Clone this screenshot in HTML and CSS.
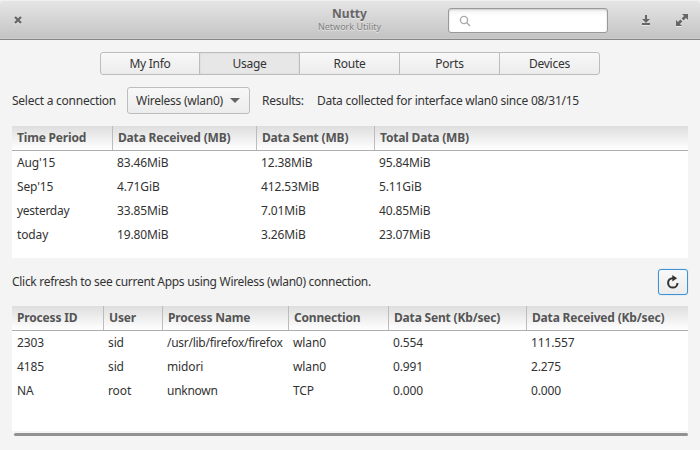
FILE: index.html
```html
<!DOCTYPE html>
<html lang="en">
<head>
<meta charset="utf-8">
<title>Nutty</title>
<link rel="stylesheet" href="styles.css">
</head>
<body>
<header class="titlebar">
  <svg class="icon close" width="8" height="8" viewBox="0 0 8 8"><path d="M1 1l6 6M7 1L1 7"/></svg>
  <div class="title"><h1>Nutty</h1><p>Network Utility</p></div>
  <div class="search"><svg width="13" height="13" viewBox="0 0 13 13"><circle cx="5" cy="5" r="3.6"/><path d="M7.8 7.8L11 11"/></svg></div>
  <svg class="icon download" width="9" height="11" viewBox="0 0 9 11"><path d="M3 0h2v4h3L4 8 0 4h3zM0 8h8v2H0z"/></svg>
  <svg class="icon expand" width="13" height="13" viewBox="0 0 13 13"><path d="M6 0h6v6l-2-2-2.4 2.4L5.6 4.4 8 2zM0 6l2 2 2.4-2.4 2 2L4 10l2 2H0z"/></svg>
</header>
<nav class="tabs"><span>My Info</span><span class="active">Usage</span><span>Route</span><span>Ports</span><span>Devices</span></nav>
<section class="connection">
  <span class="label">Select a connection</span>
  <span class="select"><span>Wireless (wlan0)</span><i></i></span>
  <span class="results">Results:</span>
  <span class="message">Data collected for interface wlan0 since 08/31/15</span>
</section>
<section class="table usage">
  <div class="row head"><b>Time Period</b><b>Data Received (MB)</b><b>Data Sent (MB)</b><b>Total Data (MB)</b></div>
  <div class="row"><span>Aug'15</span><span>83.46MiB</span><span>12.38MiB</span><span>95.84MiB</span></div>
  <div class="row"><span>Sep'15</span><span>4.71GiB</span><span>412.53MiB</span><span>5.11GiB</span></div>
  <div class="row"><span class="word">yesterday</span><span>33.85MiB</span><span>7.01MiB</span><span>40.85MiB</span></div>
  <div class="row"><span>today</span><span>19.80MiB</span><span>3.26MiB</span><span>23.07MiB</span></div>
</section>
<section class="refresh">
  <span>Click refresh to see current Apps using Wireless (wlan0) connection.</span>
  <button aria-label="Refresh"><svg width="14" height="15" viewBox="0 0 14 15"><path class="arc" d="M7.5 3.2H6.8A4.7 4.7 0 1 0 11.5 7.9"/><path d="M6.3 0l4.8 3.2-4.8 3.2z"/></svg></button>
</section>
<section class="table processes">
  <div class="row head"><b>Process ID</b><b>User</b><b>Process Name</b><b>Connection</b><b>Data Sent (Kb/sec)</b><b>Data Received (Kb/sec)</b></div>
  <div class="row"><span>2303</span><span>sid</span><span class="word">/usr/lib/firefox/firefox</span><span>wlan0</span><span>0.554</span><span>111.557</span></div>
  <div class="row"><span>4185</span><span>sid</span><span>midori</span><span>wlan0</span><span>0.991</span><span>2.275</span></div>
  <div class="row"><span>NA</span><span>root</span><span class="word">unknown</span><span>TCP</span><span>0.000</span><span>0.000</span></div>
</section>
<div class="scrollbar"></div>
</body>
</html>
```
FILE: styles.css
```css
* { box-sizing: border-box; }
body {
  margin: 0; width: 700px; height: 450px; overflow: hidden;
  background: #f4f4f4; color: #333;
  font: 12px/16px "Noto Sans", "Open Sans", sans-serif;
  white-space: nowrap;
}
.titlebar {
  display: grid; grid-template-columns: 251px 197px 160px 33px 35px;
  height: 40px; border-bottom: 1px solid #858785;
  background: linear-gradient(#e6e6e6, #c3c3c3);
  box-shadow: inset 0 1px #f1f1f1, inset 0 -1px #ccc;
  border-radius: 4px 4px 0 0;
}
.icon { fill: #666; filter: drop-shadow(0 1px 0 #e8e8e8); }
.close { margin: 16px 0 0 14px; stroke: #666; stroke-width: 2.3; }
.title { text-align: center; color: #666; text-shadow: 0 1px #e8e8e8; }
.title h1 { margin: 6px 0 0; font-size: 12px; line-height: 15px; }
.title p { margin: 0; font-size: 9px; line-height: 12px; color: #818181; }
.search {
  height: 25px; margin-top: 8px; padding: 6px 0 0 10px;
  border: 1px solid #999; border-radius: 3px;
  background: linear-gradient(#f2f2f2, #fff 30%);
  box-shadow: inset 0 1px 2px #ccc;
}
.search svg { display: block; fill: none; stroke: #aaa; stroke-width: 1.4; }
.download { margin: 15px 0 0 34px; }
.expand { margin: 14px 0 0 35px; }
.tabs {
  display: grid; grid-template-columns: 99px 100px 100px 100px 99px;
  width: 500px; height: 23px; margin: 12px 0 0 100px;
  border: 1px solid #bdbdbd; border-radius: 3px;
  background: linear-gradient(#f8f8f8, #ececec);
  letter-spacing: -.25px;
}
.tabs span { line-height: 21px; text-align: center; border-right: 1px solid #bdbdbd; }
.tabs span:last-child { border-right: 0; }
.tabs .active { background: #e7e7e7; box-shadow: inset 0 0 2px #ccc; }
.connection {
  display: grid; grid-template-columns: 115px 135px 55px 1fr;
  align-items: center; height: 27px; margin: 12px 0 0 12px;
  letter-spacing: -.25px;
}
.select {
  display: flex; align-items: center; width: 123px; height: 27px; padding-left: 8px;
  border: 1px solid #bdbdbd; border-radius: 3px;
  background: linear-gradient(#f8f8f8, #ececec);
}
.select > span { width: 94px; }
.select i { border: 5px solid transparent; border-top-color: #666; border-bottom: 0; }
.table { margin: 12px 12px 0; background: #fff; letter-spacing: -.12px; }
.usage { height: 132px; }
.processes { height: 125px; margin-top: 11px; }
.row { display: grid; height: 24px; line-height: 24px; }
.usage .row { grid-template-columns: 101px 144px 118px 1fr; }
.processes .row { grid-template-columns: 92px 59px 126px 100px 138px 1fr; }
.row span { padding-left: 4px; }
.row span:first-child, .row b:first-child { padding-left: 5px; }
.row .word { letter-spacing: -.27px; }
.row.head {
  height: 25px; line-height: 24px; color: #555; letter-spacing: -.18px;
  border-bottom: 1px solid #adadad; background: linear-gradient(#dedede, #fff);
}
.row b { padding-left: 5px; border-right: 1px solid #bcbcbc; }
.row b:last-child { border-right: 0; }
.refresh { display: flex; justify-content: space-between; align-items: center; height: 26px; margin: 11px 12px 0; letter-spacing: -.3px; }
.refresh button {
  width: 30px; height: 26px; padding: 4px 7px; border: 1px solid #3c92d2; border-radius: 3px;
  background: linear-gradient(#f8f8f8, #ececec); box-shadow: 0 0 1px #6db5e8;
}
.refresh svg { display: block; fill: #333; }
.refresh .arc { fill: none; stroke: #333; stroke-width: 2; }
.scrollbar { height: 3px; margin: 2px 12px 0 14px; border-radius: 2px; background: #929292; }
```
